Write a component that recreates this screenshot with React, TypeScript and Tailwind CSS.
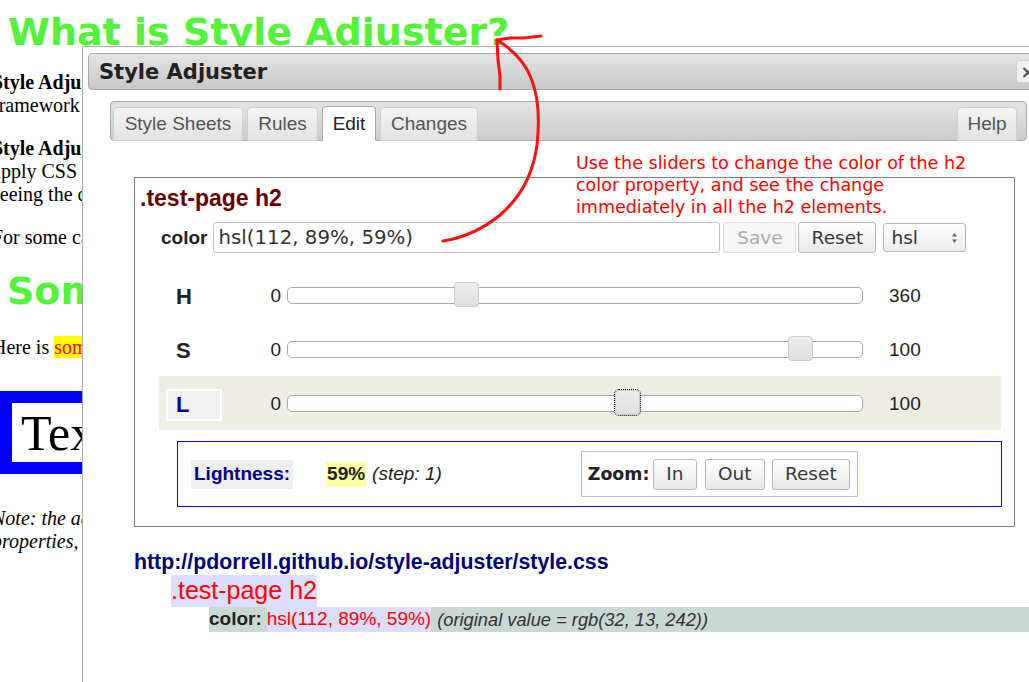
import React from "react";

const SANS = "font-['Liberation_Sans',Arial,sans-serif]";
const DV = "font-['DejaVu_Sans',Verdana,sans-serif]";

function Btn({ children, w, disabled }: { children: React.ReactNode; w: string; disabled?: boolean }) {
  return (
    <div
      className={`${w} h-[31px] flex items-center justify-center rounded-[3px] border text-[18.5px] ${DV} ${
        disabled
          ? "border-[#dcdcdc] bg-[#f6f6f6] text-[#ababab]"
          : "border-[#b9b9b9] bg-gradient-to-b from-[#ffffff] to-[#e9e9e9] text-[#3a3a3a]"
      }`}
    >
      {children}
    </div>
  );
}

function SliderRow({ label, value, max, active }: { label: string; value: number; max: number; active?: boolean }) {
  const left = Math.round((value / max) * 576) - 13;
  return (
    <div className={`flex items-center h-[54px] pt-[3px] ${active ? "bg-[#efeee4]" : ""}`}>
      <div
        className={`ml-[7px] w-[56px] h-[32px] flex items-center text-[22px] font-bold ${SANS} ${
          active ? "bg-[#f0f0f0] border-2 border-white text-[#0000a8] pl-[8px]" : "text-[#222] pl-[10px]"
        }`}
      >
        {label}
      </div>
      <div className={`w-[59px] text-right text-[19px] text-[#222] ${SANS}`}>0</div>
      <div className="relative ml-[6px] mt-[-2px] w-[576px] h-[17px] rounded-[5px] border border-[#aaa] bg-white">
        <div
          className={`absolute top-[-6px] w-[25px] h-[25px] rounded-[4px] border border-[#cbcbcb] bg-gradient-to-b from-[#ececec] to-[#e0e0e0] ${
            active ? "outline-1 outline-dotted outline-black" : ""
          }`}
          style={{ left }}
        />
      </div>
      <div className={`ml-[26px] text-[19px] text-[#222] ${SANS}`}>{max}</div>
    </div>
  );
}

export default function App() {
  return (
    <div className="relative w-[1029px] h-[682px] overflow-hidden bg-white">
      {/* Underlying test page */}
      <div className="font-['Liberation_Serif','Times_New_Roman',serif] text-[20px] leading-[23px] text-black">
        <h1 className={`ml-[8px] pt-[10px] h-[53px] text-[38px] leading-[44px] font-bold text-[#52f339] whitespace-nowrap ${DV}`}>
          What is Style Adjuster?
        </h1>
        <div className="ml-[-8px] mt-[18px] whitespace-nowrap">
          <div>
            <b>Style Adjuster</b> is a tool for adjusting CSS
          </div>
          <div>framework</div>
        </div>
        <div className="ml-[-8px] mt-[20px] whitespace-nowrap">
          <div>
            <b>Style Adjuster</b> lets you
          </div>
          <div>apply CSS properties</div>
          <div>seeing the changes</div>
        </div>
        <div className="ml-[-8px] mt-[20px] whitespace-nowrap">For some cases</div>
        <h2 className={`ml-[7px] mt-[20px] text-[38px] leading-[44px] font-bold text-[#52f339] whitespace-nowrap ${DV}`}>Some</h2>
        <div className="ml-[-8px] mt-[23px] whitespace-nowrap">
          Here is <span className="bg-[#ffff00] text-[#ff0000]">some text</span>
        </div>
        <div className="mt-[32px] w-[300px] h-[83px] border-[12px] border-[#0000ff] pl-[9px] pt-[4px] text-[50px] leading-[52px]">
          Text
        </div>
        <div className="ml-[-8px] mt-[33px] italic whitespace-nowrap">
          <div>Note: the adjuster</div>
          <div>properties, etc</div>
        </div>
      </div>

      {/* Dialog */}
      <div className="absolute left-[82px] top-[46px] w-[990px] h-[650px] bg-white border-l border-t border-[#acacac]">
        <div className="relative ml-[5px] mt-[6px] w-[960px] h-[37px] rounded-[4px] border border-[#aaa] bg-gradient-to-b from-[#e4e4e4] to-[#c7c7c7] flex items-center pl-[10px] pt-[3px]">
          <span className={`text-[21px] font-bold text-[#222] ${DV}`}>Style Adjuster</span>
          <div className={`absolute left-[927px] top-[6px] w-[24px] h-[23px] rounded-[3px] border border-[#d0d0d0] bg-[#f1f1f1] flex items-center justify-center text-[18px] font-bold text-[#555] ${DV}`}>
            ×
          </div>
        </div>

        <div className="pl-[27px] pt-[11px]">
          {/* Tabs nav */}
          <div className={`w-[917px] h-[40px] rounded-[4px] border border-[#aaa] bg-gradient-to-b from-[#e3e3e3] to-[#cdcdcd] flex items-end pl-[2px] pr-[9px] ${SANS} text-[19px]`}>
            {[
              { t: "Style Sheets", w: "w-[130px]" },
              { t: "Rules", w: "w-[71px]" },
              { t: "Edit", w: "w-[54px]", a: true },
              { t: "Changes", w: "w-[98px]" },
            ].map((tab, i) => (
              <div
                key={tab.t}
                className={`${tab.w} ${i > 0 ? "ml-[4px]" : ""} mb-[-1px] flex items-center justify-center pt-[1px] rounded-t-[4px] border ${
                  tab.a
                    ? "h-[35px] bg-white border-[#aaa] border-b-white text-[#212121]"
                    : "h-[34px] bg-gradient-to-b from-[#f4f4f4] to-[#e2e2e2] border-[#d0d0d0] text-[#555]"
                }`}
              >
                {tab.t}
              </div>
            ))}
            <div className="ml-auto w-[60px] h-[34px] mb-[-1px] pt-[1px] flex items-center justify-center rounded-t-[4px] border border-[#d0d0d0] bg-gradient-to-b from-[#f4f4f4] to-[#e2e2e2] text-[#555]">
              Help
            </div>
          </div>

          {/* Tab panel */}
          <div className="pl-[24px] pt-[36px]">
            <div className="w-[881px] border border-[#808080] pb-[19px]">
              <div className={`pl-[5px] pt-[7px] text-[23px] leading-[26px] font-bold text-[#660000] ${SANS}`}>.test-page h2</div>
              <div className="mt-[11px] ml-[26px] flex items-center h-[31px]">
                <span className={`text-[19px] font-bold text-[#222] pt-[2px] ${SANS}`}>color</span>
                <div className={`ml-[6px] w-[507px] h-[31px] rounded-[3px] border border-[#c4c4c4] bg-white flex items-center pl-[4px] text-[19.8px] text-[#333] ${DV}`}>
                  hsl(112, 89%, 59%)
                </div>
                <div className="ml-[3px]">
                  <Btn w="w-[73px]" disabled>
                    Save
                  </Btn>
                </div>
                <div className="ml-[2px]">
                  <Btn w="w-[78px]">Reset</Btn>
                </div>
                <div className={`ml-[7px] w-[83px] h-[29px] rounded-[3px] border border-[#b9b9b9] bg-gradient-to-b from-[#ffffff] to-[#ececec] flex items-center pl-[7px] pr-[7px] text-[18.5px] text-[#333] ${DV}`}>
                  <span>hsl</span>
                  <svg className="ml-auto" width="7" height="12" viewBox="0 0 7 12">
                    <path d="M3.5 1 L6 4.5 H1 Z" fill="#666" />
                    <path d="M3.5 11 L6 7.5 H1 Z" fill="#666" />
                  </svg>
                </div>
              </div>

              <div className="mt-[15px] ml-[24px] w-[842px]">
                <SliderRow label="H" value={112} max={360} />
                <SliderRow label="S" value={89} max={100} />
                <SliderRow label="L" value={59} max={100} active />
              </div>

              <div className={`mt-[11px] ml-[42px] w-[825px] h-[66px] border border-[#0000ff] flex items-center ${SANS} text-[19px]`}>
                <span className="ml-[13px] h-[29px] px-[3px] flex items-center bg-[#eeeeee] font-bold text-[#00008b]">Lightness:</span>
                <span className="ml-[33px] h-[25px] px-[1px] flex items-center bg-[#ffffa6] font-bold text-[#222]">59%</span>
                <span className="ml-[6px] italic text-[#222]">(step: 1)</span>
                <div className="ml-[139px] w-[277px] h-[46px] border border-[#bbbbff] flex items-center pl-[6px]">
                  <span className={`w-[59px] text-[17.4px] font-bold text-[#222] ${DV}`}>Zoom:</span>
                  <div className="ml-[6px]">
                    <Btn w="w-[44px]">In</Btn>
                  </div>
                  <div className="ml-[8px]">
                    <Btn w="w-[60px]">Out</Btn>
                  </div>
                  <div className="ml-[7px]">
                    <Btn w="w-[78px]">Reset</Btn>
                  </div>
                </div>
              </div>
            </div>

            {/* Changes listing */}
            <div className={`${SANS}`}>
              <div className="mt-[23px] text-[21.3px] leading-[25px] font-bold text-[#000080] whitespace-nowrap">
                http://pdorrell.github.io/style-adjuster/style.css
              </div>
              <div className="ml-[37px] flex">
                <span className="h-[32px] flex items-center bg-[#ddddff] text-[25px] text-[#ff0000]">.test-page h2</span>
              </div>
              <div className="ml-[75px] h-[25px] flex items-center bg-[#c9d8d3] text-[19px] whitespace-nowrap">
                <span className="font-bold text-[#222]">color:</span>
                <span className="ml-[5px] h-[25px] flex items-center bg-[#ddddff] text-[#ff0000]">hsl(112, 89%, 59%)</span>
                <span className="ml-[6px] italic text-[18.3px] text-[#333]">(original value = rgb(32, 13, 242))</span>
              </div>
            </div>
          </div>
        </div>
      </div>

      {/* Annotation */}
      <div className={`absolute left-[576px] top-[152px] text-[17.5px] leading-[22px] text-[#ff0000] ${DV}`}>
        <div>Use the sliders to change the color of the h2</div>
        <div>color property, and see the change</div>
        <div>immediately in all the h2 elements.</div>
      </div>

      {/* Hand-drawn arrow */}
      <svg className="absolute left-0 top-0 pointer-events-none" width="1029" height="682" viewBox="0 0 1029 682">
        <g fill="none" stroke="#ff1010" strokeWidth="3" strokeLinecap="round" strokeLinejoin="round">
          <path d="M443 241 C462 238 482 230 500 215 C520 198 533 175 537 145 C540 118 538 95 531 78 C524 60 510 48 497 40" />
          <path d="M497 40 L510 38 L524 38 L541 36" />
          <path d="M497 41 L498 60 L500 76 L500 89" />
        </g>
      </svg>
    </div>
  );
}
